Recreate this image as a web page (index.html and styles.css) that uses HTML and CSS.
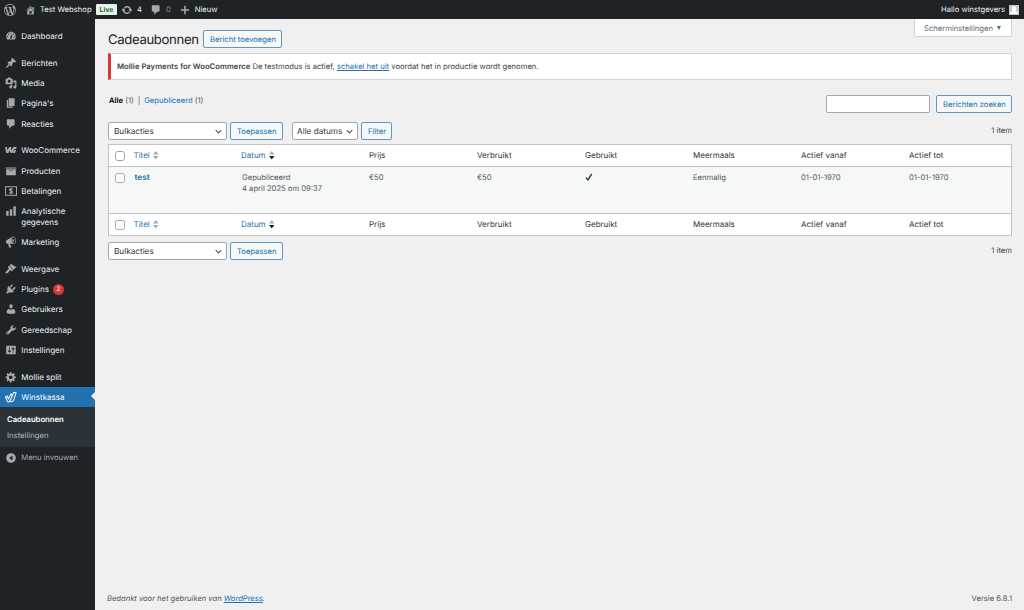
FILE: index.html
```html
<!DOCTYPE html>
<html lang="nl">
<head>
  <meta charset="UTF-8">
  <title>Cadeaubonnen</title>
  <link rel="stylesheet" href="styles.css">
</head>
<body>

  <header class="adminbar">
    <svg class="icon bar-logo" viewBox="0 0 20 20"><path d="M20 10c0-5.51-4.49-10-10-10C4.48 0 0 4.49 0 10c0 5.52 4.48 10 10 10 5.51 0 10-4.48 10-10zM7.78 15.37L4.37 6.22c.55-.02 1.17-.08 1.17-.08.5-.06.44-1.13-.06-1.11 0 0-1.45.11-2.37.11-.18 0-.37 0-.58-.01C4.12 2.69 6.87 1.11 10 1.11c2.33 0 4.45.87 6.05 2.34-.68-.11-1.65.39-1.65 1.58 0 .74.45 1.36.9 2.1.35.61.55 1.36.55 2.46 0 1.49-1.4 5-1.4 5l-3.03-8.37c.54-.02.82-.17.82-.17.5-.05.44-1.25-.06-1.22 0 0-1.44.12-2.38.12-.87 0-2.33-.12-2.33-.12-.5-.03-.56 1.2-.06 1.22l.92.08 1.26 3.41zM17.41 10c.24-.64.74-1.87.43-4.25.7 1.29 1.05 2.71 1.05 4.25 0 3.29-1.73 6.24-4.4 7.78.97-2.59 1.94-5.2 2.92-7.78zM6.1 18.09C3.12 16.65 1.11 13.53 1.11 10c0-1.3.23-2.48.72-3.59C3.25 10.3 4.67 14.2 6.1 18.09zm4.03-6.63l2.58 6.98c-.86.29-1.76.45-2.71.45-.79 0-1.57-.11-2.29-.33.81-2.38 1.62-4.74 2.42-7.1z"/></svg>
    <svg class="icon bar-home" viewBox="0 0 20 20"><path d="M16 8.5l1.53 1.53-1.06 1.06L10 4.6l-6.47 6.49-1.06-1.06L10 2.5l4 4v-2h2v4zm-6-2.46l6 5.99V18H4v-5.97zM12 17v-5H8v5h4z"/></svg>
    <span class="bar-site">Test Webshop</span>
    <span class="live">Live</span>
    <svg class="icon bar-update" viewBox="0 0 20 20"><path d="M10.2 3.28c3.53 0 6.43 2.61 6.92 6h2.08l-3.5 4-3.5-4h2.32c-.45-1.97-2.21-3.45-4.32-3.45-1.45 0-2.73.71-3.54 1.78L4.95 5.66C6.23 4.2 8.11 3.28 10.2 3.28zm-.4 13.44c-3.52 0-6.43-2.61-6.92-6H.8l3.5-4c1.17 1.33 2.33 2.67 3.5 4H5.48c.45 1.97 2.21 3.45 4.32 3.45 1.45 0 2.73-.71 3.54-1.78l1.71 1.95c-1.28 1.46-3.15 2.38-5.25 2.38z"/></svg>
    <span class="bar-count">4</span>
    <svg class="icon bar-comment" viewBox="0 0 20 20"><path d="M5 2h9c1.1 0 2 .9 2 2v7c0 1.1-.9 2-2 2h-2l-5 5v-5H5c-1.1 0-2-.9-2-2V4c0-1.1.9-2 2-2z"/></svg>
    <span class="bar-zero">0</span>
    <svg class="icon bar-plus" viewBox="0 0 20 20"><path d="M17 8.7v2.6h-5.7V17H8.7v-5.7H3V8.7h5.7V3h2.6v5.7z"/></svg>
    <span>Nieuw</span>
    <div class="account">
      <span>Hallo winstgevers</span>
      <svg class="avatar" viewBox="0 0 20 20"><path fill="#c8c8c8" d="M0 0h20v20H0z"/><path fill="#fff" d="M10 2c3 0 4.5 2 4.5 5 0 2-.8 3.8-2 4.8 3 .8 5.5 2.2 5.5 6.2H2c0-4 2.5-5.4 5.5-6.2-1.2-1-2-2.8-2-4.8C5.5 4 7 2 10 2z"/></svg>
    </div>
  </header>

  <div class="layout">
    <nav class="menu">
      <a class="item"><svg class="icon" viewBox="0 0 20 20"><path d="M3.76 16h12.48c1.1-1.37 1.76-3.11 1.76-5 0-4.42-3.58-8-8-8s-8 3.58-8 8c0 1.89.66 3.63 1.76 5zM10 4c.55 0 1 .45 1 1s-.45 1-1 1-1-.45-1-1 .45-1 1-1zM6 6c.55 0 1 .45 1 1s-.45 1-1 1-1-.45-1-1 .45-1 1-1zm8 0c.55 0 1 .45 1 1s-.45 1-1 1-1-.45-1-1 .45-1 1-1zm-5.37 5.55L12 7v6c0 1.1-.9 2-2 2s-2-.9-2-2c0-.57.24-1.08.63-1.45zM4 10c.55 0 1 .45 1 1s-.45 1-1 1-1-.45-1-1 .45-1 1-1zm12 0c.55 0 1 .45 1 1s-.45 1-1 1-1-.45-1-1 .45-1 1-1zm-5 3c0-.55-.45-1-1-1s-1 .45-1 1 .45 1 1 1 1-.45 1-1z"/></svg>Dashboard</a>
      <div class="separator"></div>
      <a class="item"><svg class="icon" viewBox="0 0 20 20"><path d="M10.44 3.02l1.82-1.82 6.36 6.35-1.83 1.82c-1.05-.68-2.48-.57-3.41.36l-.75.75c-.92.93-1.04 2.35-.35 3.41l-1.83 1.82-2.41-2.41-2.8 2.79c-.42.42-3.38 2.71-3.8 2.29s1.86-3.39 2.28-3.81l2.79-2.79L4.1 9.36l1.83-1.82c1.05.69 2.48.57 3.4-.36l.75-.75c.93-.92 1.05-2.35.36-3.41z"/></svg>Berichten</a>
      <a class="item"><svg class="icon" viewBox="0 0 20 20"><path d="M13 11V4c0-.55-.45-1-1-1h-1.67L9 1H5L3.67 3H2c-.55 0-1 .45-1 1v7c0 .55.45 1 1 1h10c.55 0 1-.45 1-1zM7 4.5c1.38 0 2.5 1.12 2.5 2.5S8.38 9.5 7 9.5 4.5 8.38 4.5 7 5.62 4.5 7 4.5zM14 6h5v10.5c0 1.38-1.12 2.5-2.5 2.5S14 17.88 14 16.5s1.12-2.5 2.5-2.5c.17 0 .34.02.5.05V9h-3V6zm-4 8.05V13h2v3.5c0 1.38-1.12 2.5-2.5 2.5S7 17.88 7 16.5 8.12 14 9.5 14c.17 0 .34.02.5.05z"/></svg>Media</a>
      <a class="item"><svg class="icon" viewBox="0 0 20 20"><path d="M6 15V2h10v13H6zm-1 1h8v2H3V5h2v11z"/></svg>Pagina's</a>
      <a class="item"><svg class="icon" viewBox="0 0 20 20"><path d="M5 2h9c1.1 0 2 .9 2 2v7c0 1.1-.9 2-2 2h-2l-5 5v-5H5c-1.1 0-2-.9-2-2V4c0-1.1.9-2 2-2z"/></svg>Reacties</a>
      <div class="separator"></div>
      <a class="item"><svg class="icon" viewBox="0 0 20 20"><path d="M0 5h3.4l.4 5.500L7 5h3l.6 5.500L13.800 5h6l-1.600 3.200h-2.400L12.400 15H9l-.9-4.200L5.600 15H2zM15.500 10h3l-1.800 5h-3.400z"/></svg>WooCommerce</a>
      <a class="item"><svg class="icon" viewBox="0 0 20 20"><path d="M19 4v2H1V4h18zM2 7h16v10H2V7zm11 3V9H7v1h6z"/></svg>Producten</a>
      <a class="item"><svg class="icon line" viewBox="0 0 20 20"><path stroke-width="1.7" d="M.8 2.8h18.400v14.400H.8zM12.800 7.300C11 5.800 7.500 6 7.500 8c0 2.500 5.200 1.500 5.200 4 0 2-3.700 2.200-5.500.7M10 5v10"/></svg>Betalingen</a>
      <a class="item double"><svg class="icon" viewBox="0 0 20 20"><path d="M18 18V2h-4v16h4zm-6 0V7H8v11h4zm-6 0v-8H2v8h4z"/></svg>Analytische<br>gegevens</a>
      <a class="item"><svg class="icon" viewBox="0 0 20 20"><path d="M18.15 5.94c.46 1.62.38 3.22-.02 4.48-.42 1.28-1.26 2.18-2.3 2.48-.16.06-.26.06-.4.06-.06.02-.12.02-.18.02-.06.02-.14.02-.22.02h-6.8l2.22 5.5c.02.14-.06.26-.14.34-.08.1-.24.16-.34.16H6.95c-.1 0-.26-.06-.34-.16-.08-.08-.16-.2-.14-.34l-1-5.5H4.25l-.02-.02c-.5.06-1.08-.18-1.54-.62s-.88-1.08-1.06-1.88c-.24-.8-.2-1.56-.02-2.2.18-.62.58-1.08 1.06-1.3l.02-.02 9-5.4c.1-.06.18-.1.24-.16.06-.04.14-.08.24-.12.16-.08.28-.12.5-.18 1.04-.3 2.24.1 3.22.98s1.84 2.24 2.26 3.86zm-2.58 5.98h-.02c.4-.1.74-.34 1.04-.7.58-.7.86-1.76.86-3.04 0-.64-.1-1.3-.28-1.98-.34-1.36-1.02-2.5-1.78-3.24s-1.68-1.1-2.46-.88c-.82.22-1.4.96-1.7 2-.32 1.04-.28 2.36.06 3.72.38 1.36 1 2.5 1.8 3.24.78.74 1.62 1.1 2.48.88zm-2.54-7.08c.22-.04.42-.02.62.04.38.16.76.48 1.02 1s.42 1.2.42 1.78c0 .3-.04.56-.12.8-.18.48-.44.84-.86.94-.34.1-.8-.06-1.14-.4s-.64-.86-.78-1.5c-.18-.62-.12-1.24.02-1.72s.48-.84.82-.94z"/></svg>Marketing</a>
      <div class="separator"></div>
      <a class="item"><svg class="icon" viewBox="0 0 20 20"><path d="M14.48 11.06L7.41 3.99l1.5-1.5c.5-.56 2.3-.47 3.51.32 1.21.8 1.43 1.28 2.91 2.1 1.18.64 2.45 1.26 4.45.85zm-.71.71L6.7 4.7 4.93 6.47c-.39.39-.39 1.02 0 1.41l1.06 1.06c.39.39.39 1.03 0 1.42-.6.6-1.43 1.11-2.21 1.69-.35.26-.7.53-1.01.84C1.43 14.23.4 16.08 1.4 17.07c.99 1 2.84-.03 4.18-1.36.31-.31.58-.66.85-1.02.57-.78 1.08-1.61 1.69-2.21.39-.39 1.02-.39 1.41 0l1.06 1.06c.39.39 1.02.39 1.41 0z"/></svg>Weergave</a>
      <a class="item"><svg class="icon" viewBox="0 0 20 20"><path d="M13.11 4.36L9.87 7.6 8 5.73l3.24-3.24c.35-.34 1.05-.2 1.56.32.52.51.66 1.21.31 1.55zm-8 1.77l.91-1.12 9.01 9.01-1.19.84c-.71.71-2.63 1.16-3.82 1.16H6.14L4.9 17.26c-.59.59-1.54.59-2.12 0-.59-.58-.59-1.53 0-2.12l1.24-1.24v-3.88c0-1.13.4-3.19 1.09-3.89zm7.26 3.97l3.24-3.24c.34-.35 1.04-.21 1.55.31.52.51.66 1.21.31 1.55l-3.24 3.25z"/></svg>Plugins<span class="bubble">2</span></a>
      <a class="item"><svg class="icon" viewBox="0 0 20 20"><path d="M10 9.25c-2.27 0-2.73-3.44-2.73-3.44C7 4.02 7.82 2 9.97 2c2.16 0 2.98 2.02 2.71 3.81 0 0-.41 3.44-2.68 3.44zm0 2.57L12.72 10c2.39 0 4.52 2.33 4.52 4.53v2.49s-3.65 1.13-7.24 1.13c-3.65 0-7.24-1.13-7.24-1.13v-2.49c0-2.25 1.94-4.48 4.47-4.48z"/></svg>Gebruikers</a>
      <a class="item"><svg class="icon" viewBox="0 0 20 20"><path d="M16.68 9.77c-1.34 1.34-3.3 1.67-4.95.99l-5.41 6.52c-.99.99-2.59.99-3.58 0s-.99-2.59 0-3.57l6.52-5.42c-.68-1.65-.35-3.61.99-4.95 1.28-1.28 3.12-1.62 4.72-1.06l-2.89 2.89 2.82 2.82 2.86-2.87c.53 1.58.18 3.39-1.08 4.65zM3.81 16.21c.4.39 1.04.39 1.43 0 .4-.4.4-1.04 0-1.43-.39-.4-1.03-.4-1.43 0-.39.39-.39 1.03 0 1.43z"/></svg>Gereedschap</a>
      <a class="item"><svg class="icon" viewBox="0 0 20 20"><path d="M18 16V4c0-.55-.45-1-1-1H3c-.55 0-1 .45-1 1v12c0 .55.45 1 1 1h14c.55 0 1-.45 1-1zM8 11h1c.55 0 1 .45 1 1s-.45 1-1 1H8v1.5c0 .28-.22.5-.5.5s-.5-.22-.5-.5V13H6c-.55 0-1-.45-1-1s.45-1 1-1h1V5.5c0-.28.22-.5.5-.5s.5.22.5.5V11zm5-2h-1c-.55 0-1-.45-1-1s.45-1 1-1h1V5.5c0-.28.22-.5.5-.5s.5.22.5.5V7h1c.55 0 1 .45 1 1s-.45 1-1 1h-1v5.5c0 .28-.22.5-.5.5s-.5-.22-.5-.5V9z"/></svg>Instellingen</a>
      <div class="separator"></div>
      <a class="item"><svg class="icon" viewBox="0 0 20 20"><path d="M18 12h-2.18c-.17.7-.44 1.35-.81 1.93l1.54 1.54-2.1 2.1-1.54-1.54c-.58.36-1.23.63-1.91.79V19H8v-2.18c-.68-.16-1.33-.43-1.91-.79l-1.54 1.54-2.12-2.12 1.54-1.54c-.36-.58-.63-1.23-.79-1.91H1V9.03h2.17c.16-.7.44-1.35.8-1.94L2.43 5.55l2.1-2.1 1.54 1.54c.58-.37 1.24-.64 1.93-.81V2h3v2.18c.68.16 1.33.43 1.91.79l1.54-1.54 2.12 2.12-1.54 1.54c.36.59.64 1.24.8 1.94H18V12zm-8.5 1.5c1.66 0 3-1.34 3-3s-1.34-3-3-3-3 1.34-3 3 1.34 3 3 3z"/></svg>Mollie split</a>
      <a class="item current"><svg class="icon line" viewBox="0 0 20 20"><path stroke-width="1.7" stroke-linejoin="round" d="M.8 9.5L4 8.500l1.500 5L9.500 5l2.800 1.200L8 16.800c-1 2-3.800 2-4.400 0zM9 15l5.500-13 4 1-4.300 12.500c-1 2.500-4.200 3-6 1.500"/></svg>Winstkassa</a>
      <div class="submenu">
        <a class="sub active">Cadeaubonnen</a>
        <a class="sub">Instellingen</a>
      </div>
      <a class="item collapse"><svg class="icon" viewBox="0 0 20 20"><path fill-rule="evenodd" d="M10 2a8 8 0 1 0 0 16 8 8 0 0 0 0-16zm2.500 4v8L7 10z"/></svg>Menu invouwen</a>
    </nav>

    <main class="content">
      <div class="heading">
        <h1>Cadeaubonnen</h1>
        <a class="button add-new">Bericht toevoegen</a>
        <div class="screen-options">Scherminstellingen <span class="caret"></span></div>
      </div>

      <div class="notice"><p><strong>Mollie Payments for WooCommerce</strong> De testmodus is actief, <a class="link">schakel het uit</a> voordat het in productie wordt genomen.</p></div>

      <div class="filters">
        <div class="views"><b>Alle</b> (1) <span class="bar">|</span> <a>Gepubliceerd</a> (1)</div>
        <div class="search">
          <input class="search-input" type="text">
          <a class="button find">Berichten zoeken</a>
        </div>
      </div>

      <div class="tablenav top">
        <div class="select bulk">Bulkacties<svg class="chevron" viewBox="0 0 10 10"><path d="M1 3l4 4 4-4"/></svg></div>
        <a class="button apply">Toepassen</a>
        <div class="select dates">Alle datums<svg class="chevron" viewBox="0 0 10 10"><path d="M1 3l4 4 4-4"/></svg></div>
        <a class="button filter">Filter</a>
        <span class="total">1 item</span>
      </div>

      <table class="list">
        <colgroup><col class="c-check"><col class="c-title"><col class="c-date"><col class="c-value"><col class="c-value"><col class="c-value"><col class="c-value"><col class="c-value"><col></colgroup>
        <thead>
          <tr>
            <th><span class="check"></span></th>
            <th><a>Titel<svg class="sort" viewBox="0 0 6 10"><path d="M3 0l3 4H0zM0 5.500h6l-3 4z"/></svg></a></th>
            <th><a>Datum<svg class="sort" viewBox="0 0 6 10"><path d="M3 0l3 4H0z"/><path class="on" d="M0 5.500h6l-3 4z"/></svg></a></th>
            <th>Prijs</th><th>Verbruikt</th><th>Gebruikt</th><th>Meermaals</th><th>Actief vanaf</th><th>Actief tot</th>
          </tr>
        </thead>
        <tbody>
          <tr>
            <td><span class="check"></span></td>
            <td><a class="row-title">test</a></td>
            <td class="date">Gepubliceerd<br>4 april 2025 om 09:37</td>
            <td>€50</td><td>€50</td>
            <td><svg class="tick" viewBox="0 0 8 8"><path d="M1 4.600l1.900 2.200L6.800.9"/></svg></td>
            <td>Eenmalig</td><td>01-01-1970</td><td>01-01-1970</td>
          </tr>
        </tbody>
        <tfoot>
          <tr>
            <th><span class="check"></span></th>
            <th><a>Titel<svg class="sort" viewBox="0 0 6 10"><path d="M3 0l3 4H0zM0 5.500h6l-3 4z"/></svg></a></th>
            <th><a>Datum<svg class="sort" viewBox="0 0 6 10"><path d="M3 0l3 4H0z"/><path class="on" d="M0 5.500h6l-3 4z"/></svg></a></th>
            <th>Prijs</th><th>Verbruikt</th><th>Gebruikt</th><th>Meermaals</th><th>Actief vanaf</th><th>Actief tot</th>
          </tr>
        </tfoot>
      </table>

      <div class="tablenav bottom">
        <div class="select bulk">Bulkacties<svg class="chevron" viewBox="0 0 10 10"><path d="M1 3l4 4 4-4"/></svg></div>
        <a class="button apply">Toepassen</a>
        <span class="total">1 item</span>
      </div>

      <footer class="footer">
        <em>Bedankt voor het gebruiken van <a class="link">WordPress</a>.</em>
        <span>Versie 6.8.1</span>
      </footer>
    </main>
  </div>

</body>
</html>
```
FILE: styles.css
```css
* {
  box-sizing: border-box;
}

body {
  margin: 0;
  height: 610px;
  overflow: hidden;
  display: flex;
  flex-direction: column;
  background: #f0f0f1;
  color: #3c434a;
  font-family: Inter, "Liberation Sans", sans-serif;
  font-size: 7.65px;
  line-height: 12px;
  text-rendering: geometricPrecision;
}

.icon {
  width: 12px;
  height: 12px;
  flex: none;
  fill: #a7aaad;
}

.icon.line {
  fill: none;
  stroke: #a7aaad;
}

/* top bar */
.adminbar {
  height: 19px;
  flex: none;
  display: flex;
  align-items: center;
  padding: 0 5px 0 4px;
  background: #1d2327;
  color: #f0f0f1;
}

.bar-home {
  margin-left: 9px;
  width: 11px;
}

.bar-site {
  margin-left: 4px;
  width: 51px;
  white-space: nowrap;
}

.live {
  margin-left: 5px;
  width: 21px;
  height: 11px;
  line-height: 11px;
  text-align: center;
  border-radius: 1px;
  background: #e6f2e8;
  color: #00600f;
  font-size: 7px;
  font-weight: 600;
}

.bar-update {
  margin-left: 4px;
}

.bar-count {
  margin-left: 4px;
}

.bar-comment {
  margin-left: 8px;
}

.bar-zero {
  margin-left: 4px;
  color: #8c8f94;
}

.bar-plus {
  margin-left: 8.5px;
  margin-right: 3.5px;
}

.account {
  margin-left: auto;
  display: flex;
  align-items: center;
  gap: 4px;
}

.avatar {
  width: 10px;
  height: 10px;
}

.layout {
  flex: 1;
  display: flex;
  min-height: 0;
}

/* side menu */
.menu {
  width: 95px;
  flex: none;
  padding-top: 7px;
  background: #1d2327;
  color: #f0f0f1;
  font-size: 8px;
}

.item {
  display: flex;
  align-items: center;
  height: 20.3px;
  padding-left: 5px;
  white-space: nowrap;
}

.item .icon {
  margin-right: 4.3px;
}

.item.double {
  height: 31.2px;
  line-height: 11px;
}

.double .icon {
  margin-top: -11px;
}

.separator {
  height: 6.3px;
}

.bubble {
  margin-left: 4px;
  width: 11px;
  height: 11px;
  border-radius: 50%;
  background: #d63638;
  color: #fff;
  font-size: 6.5px;
  line-height: 11px;
  text-align: center;
}

.item.current {
  position: relative;
  background: #2271b1;
  color: #fff;
}

.current .icon {
  stroke: #fff;
}

.current::after {
  content: "";
  position: absolute;
  right: 0;
  top: 5.5px;
  border: 4.7px solid transparent;
  border-right-color: #f0f0f1;
  border-left: 0;
}

.submenu {
  height: 40px;
  padding: 4.5px 7px;
  background: #2c3338;
  font-size: 7.7px;
}

.sub {
  display: block;
  height: 16.5px;
  line-height: 16.5px;
  color: #b4b7ba;
}

.sub.active {
  color: #fff;
  font-weight: 600;
}

.item.collapse {
  height: 21px;
  color: #a7aaad;
  font-size: 7.6px;
}

/* page */
.content {
  flex: 1;
  display: flex;
  flex-direction: column;
  padding: 0 12px 0 13px;
}

.content a {
  color: #2271b1;
}

.heading {
  display: flex;
  align-items: flex-start;
  height: 34px;
}

h1 {
  margin: 11px 0 0;
  width: 95px;
  color: #1d2327;
  font-size: 13.2px;
  font-weight: 400;
  line-height: 20px;
  letter-spacing: -0.38px;
  white-space: nowrap;
}

.button {
  height: 18px;
  padding: 0 6px;
  border: 1px solid #5d97c6;
  border-radius: 2px;
  background: #f6f7f7;
  line-height: 17px;
  text-align: center;
  white-space: nowrap;
}

.add-new {
  margin-top: 11px;
  width: 79px;
}

.screen-options {
  margin-left: auto;
  width: 98px;
  height: 18px;
  padding-left: 9px;
  border: 1px solid #d2d4d7;
  border-top: 0;
  border-radius: 0 0 2px 2px;
  background: #fff;
  color: #646970;
  line-height: 19px;
  white-space: nowrap;
}

.caret {
  display: inline-block;
  margin: 0 0 1px 2px;
  border: 2.5px solid transparent;
  border-top: 4.5px solid #646970;
  border-bottom: 0;
}

.notice {
  height: 27px;
  border: 1px solid #d2d4d7;
  border-left: 3px solid #d63638;
  padding-left: 6px;
  background: #fff;
}

.notice p {
  margin: 0;
  line-height: 26px;
}

.notice strong {
  font-weight: 600;
  letter-spacing: 0.04px;
}

.link {
  text-decoration: underline;
}

.filters {
  display: flex;
  justify-content: space-between;
  padding-top: 15px;
  height: 41px;
}

.views {
  padding: 0 0 0 1px;
  color: #50575e;
}

.views b {
  color: #000;
  font-weight: 600;
}

.bar {
  margin: 0 1.7px;
}

.search {
  display: flex;
  gap: 6px;
}

.search-input {
  width: 104px;
  height: 18px;
  border: 1px solid #a4a7ab;
  border-radius: 2px;
  background: #fff;
}

.find {
  width: 76px;
}

.tablenav {
  display: flex;
  align-items: center;
  height: 18px;
}

.tablenav.top {
  margin: 1px 0 4px;
}

.tablenav.bottom {
  margin-top: 6px;
}

.select {
  display: flex;
  align-items: center;
  justify-content: space-between;
  height: 18px;
  padding: 0 4px 0 5px;
  border: 1px solid #a4a7ab;
  border-radius: 2px;
  background: #fff;
  color: #2c3338;
  font-size: 8.2px;
  white-space: nowrap;
}

.bulk {
  width: 119px;
}

.dates {
  width: 66px;
  margin-left: 9px;
  margin-right: 3px;
  padding-left: 4px;
}

.chevron {
  width: 7px;
  height: 7px;
  flex: none;
  fill: none;
  stroke: #50575e;
  stroke-width: 1.6;
}

.apply {
  margin-left: 3px;
  width: 53px;
}

.filter {
  width: 31px;
}

.total {
  margin-left: auto;
}

/* list table */
.list {
  width: 904px;
  table-layout: fixed;
  border-collapse: separate;
  border-spacing: 0;
  border: 1px solid #c3c4c7;
  background: #fff;
}

.c-check {
  width: 24.5px;
}

.c-title {
  width: 107.5px;
}

.c-date {
  width: 128px;
}

.c-value {
  width: 108px;
}

.list th,
.list td {
  padding: 0;
  text-align: left;
  white-space: nowrap;
}

.list th {
  height: 21px;
  padding-bottom: 1px;
  color: #2c3338;
  font-size: 8px;
  font-weight: 400;
  vertical-align: middle;
}

.list td {
  height: 48px;
  padding-top: 4.5px;
  border: solid #c3c4c7;
  border-width: 1px 0;
  background: #f6f7f7;
  color: #50575e;
  vertical-align: top;
}

.list td.date {
  padding-left: 1px;
  line-height: 11.5px;
}

.check {
  display: block;
  width: 10px;
  height: 10px;
  margin-left: 6px;
  border: 1px solid #a4a7ab;
  border-radius: 2.5px;
  background: #fff;
}

th .check {
  margin-top: 1px;
}

td .check {
  margin-top: 1.5px;
}

.row-title {
  padding-left: 1px;
  font-size: 8.3px;
  font-weight: 600;
}

.sort {
  width: 5.5px;
  height: 9px;
  margin-left: 3.5px;
  vertical-align: -2px;
  fill: #a7aaad;
}

.sort .on {
  fill: #1d2327;
}

.tick {
  display: block;
  width: 8px;
  height: 8px;
  margin-top: 1px;
  fill: none;
  stroke: #2c3338;
  stroke-width: 1.4;
}

.footer {
  display: flex;
  justify-content: space-between;
  margin: auto 0 5px -1px;
  color: #50575e;
}

.footer em {
  letter-spacing: -0.03px;
}
```
